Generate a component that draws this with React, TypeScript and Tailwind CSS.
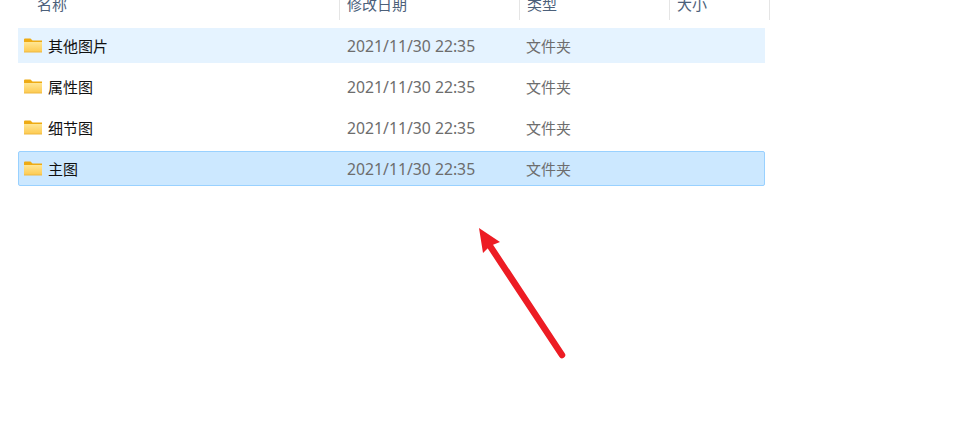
const FONT = "font-['Noto_Sans','Noto_Sans_CJK_SC',sans-serif]"

const ROWS = [
  { name: '其他图片', cls: 'bg-[#e5f3ff] border-[#e5f3ff]' },
  { name: '属性图', cls: 'border-transparent' },
  { name: '细节图', cls: 'border-transparent' },
  { name: '主图', cls: 'bg-[#cce8ff] border-[#99d1ff] rounded-[2px]' },
]

function FolderIcon() {
  return (
    <svg width="18" height="15" viewBox="0 0 18 15" className="shrink-0">
      <defs>
        <linearGradient id="folderFill" x1="0" y1="0" x2="0" y2="1">
          <stop offset="0" stopColor="#ffe694" />
          <stop offset="1" stopColor="#fdca50" />
        </linearGradient>
      </defs>
      <path d="M0 1.5 Q0 .5 1 .5 H6.5 L8.5 2.5 H18 V6 H0 Z" fill="#eeab14" />
      <path d="M0 4 H18 V14 H0 Z" fill="url(#folderFill)" />
      <path d="M0 14 H18" stroke="#eeb843" strokeWidth="1" />
    </svg>
  )
}

function HeaderCell({ label, width, pad }: { label: string; width: string; pad: string }) {
  return (
    <div className={`${width} ${pad} h-5 border-r border-[#e5e5e5] text-[15px] leading-[8px] text-[#4c607a] shrink-0`}>
      {label}
    </div>
  )
}

export default function App() {
  return (
    <div className={`${FONT} w-[966px] h-[426px] bg-white overflow-hidden`}>
      <div className="flex h-5 ml-[18px] mb-2">
        <HeaderCell label="名称" width="w-[322px]" pad="pl-[19px]" />
        <HeaderCell label="修改日期" width="w-[180px]" pad="pl-[7px]" />
        <HeaderCell label="类型" width="w-[150px]" pad="pl-[7px]" />
        <HeaderCell label="大小" width="w-[100px]" pad="pl-[7px]" />
      </div>

      <div className="flex flex-col gap-[6px] ml-[18px] w-[747px]">
        {ROWS.map(row => (
          <div key={row.name} className={`flex items-center h-[35px] border text-[15px] ${row.cls}`}>
            <div className="flex items-center w-[322px] pl-[5px] gap-[6px] text-[#111111]">
              <FolderIcon />
              <span className="pt-[2px]">{row.name}</span>
            </div>
            <div className="w-[180px] pl-[6px] pt-[2px] text-[15.75px] text-[#6d6d6d]">2021/11/30 22:35</div>
            <div className="pl-[5px] pt-[2px] text-[#6d6d6d]">文件夹</div>
          </div>
        ))}
      </div>

      {/* arrow */}
      <svg width="966" height="426" viewBox="0 0 966 426" className="absolute left-0 top-0 pointer-events-none">
        <path d="M562 355 L488 243" stroke="#ed1c24" strokeWidth="6.5" strokeLinecap="round" fill="none" />
        <path d="M479 228 L500 242 L490 246 L483 253 Z" fill="#ed1c24" />
      </svg>
    </div>
  )
}
